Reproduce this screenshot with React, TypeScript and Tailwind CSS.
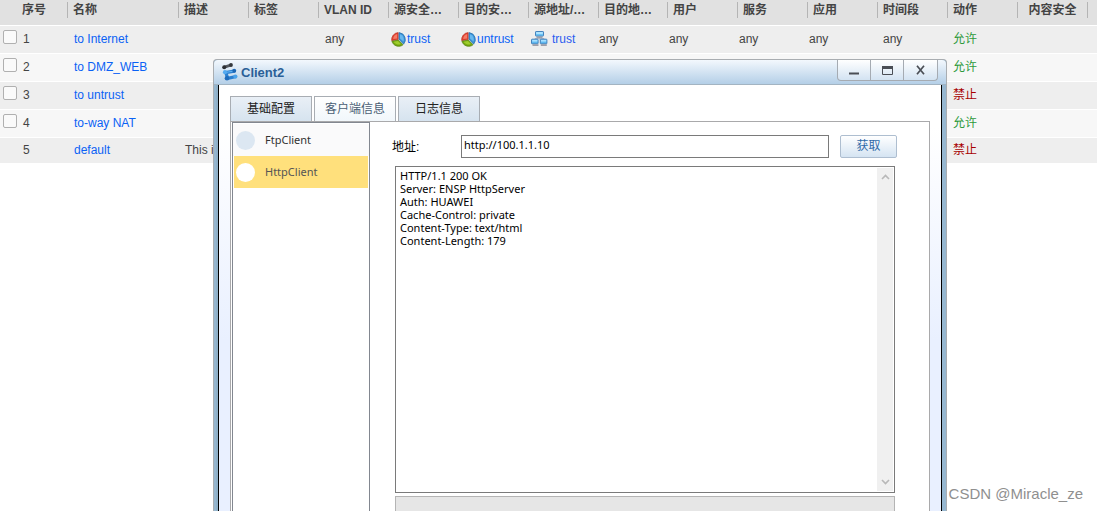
const columns = [
  { label: '序号', width: 'w-[67px]' },
  { label: '名称', width: 'w-[111px]' },
  { label: '描述', width: 'w-[70px]' },
  { label: '标签', width: 'w-[70px]' },
  { label: 'VLAN ID', width: 'w-[70px]' },
  { label: '源安全…', width: 'w-[70px]' },
  { label: '目的安…', width: 'w-[70px]' },
  { label: '源地址/…', width: 'w-[70px]' },
  { label: '目的地…', width: 'w-[69px]' },
  { label: '用户', width: 'w-[70px]' },
  { label: '服务', width: 'w-[70px]' },
  { label: '应用', width: 'w-[70px]' },
  { label: '时间段', width: 'w-[70px]' },
  { label: '动作', width: 'w-[70px]' },
  { label: '内容安全', width: 'w-[70px]', center: true },
  { label: '', width: '' },
];

const rules = [
  { id: 1, name: 'to Internet', allow: true, detailed: true },
  { id: 2, name: 'to DMZ_WEB', allow: true },
  { id: 3, name: 'to untrust', allow: false },
  { id: 4, name: 'to-way NAT', allow: true },
  { id: 5, name: 'default', desc: 'This i', allow: false },
];

const response = `HTTP/1.1 200 OK
Server: ENSP HttpServer
Auth: HUAWEI
Cache-Control: private
Content-Type: text/html
Content-Length: 179`;

function ZoneIcon() {
  return (
    <svg width="15" height="15" viewBox="0 0 15 15" className="shrink-0">
      <circle cx="7.5" cy="7.5" r="7" fill="#f4f6f2" />
      <path d="M7.2 7.6V0.6A7 7 0 0 0 0.7 8.6Z" fill="#e2402f" stroke="#b8342a" strokeWidth="0.7" />
      <path d="M6.2 6.4V2A5.3 5.3 0 0 0 2.2 7Z" fill="#f47c68" />
      <path d="M8 0.6A7 7 0 0 1 12.6 12.2L8 7.2Z" fill="#3a93d8" stroke="#2b6ea8" strokeWidth="0.7" />
      <path d="M9 2.2A5.6 5.6 0 0 1 12.5 9.5L9 6.4Z" fill="#69b8ee" />
      <path d="M0.9 9.2 7.4 8.1 12 12.8A7 7 0 0 1 0.9 9.2Z" fill="#74a80f" stroke="#557d10" strokeWidth="0.7" />
      <path d="M2.6 9.8 7 9 9.8 12A5.6 5.6 0 0 1 2.6 9.8Z" fill="#9fce2c" />
    </svg>
  );
}

function AddressIcon() {
  return (
    <svg width="17" height="16" viewBox="0 0 17 16" className="shrink-0">
      <path d="M8.5 6.5v2M4 8.5v-1h9v1" fill="none" stroke="#aab4c4" />
      <rect x="4.5" y="0.5" width="8" height="4.6" rx="0.6" fill="#6cc4f6" stroke="#4583bd" />
      <rect x="5.2" y="1.1" width="6.6" height="1.8" fill="#b4e6ff" />
      <rect x="5.5" y="5.6" width="6" height="1.2" fill="#8a8f9c" />
      <rect x="0.5" y="8.2" width="6.6" height="4.6" rx="0.6" fill="#5db8f0" stroke="#4583bd" />
      <rect x="1.2" y="8.9" width="5.2" height="1.7" fill="#a8e0ff" />
      <rect x="1.5" y="13.4" width="6" height="1.4" fill="#8c8c98" />
      <rect x="9.3" y="8.2" width="6.6" height="4.6" rx="0.6" fill="#5db8f0" stroke="#4583bd" />
      <rect x="10" y="8.9" width="5.2" height="1.7" fill="#a8e0ff" />
      <rect x="9.8" y="13.4" width="6" height="1.4" fill="#8c8c98" />
    </svg>
  );
}

function ClientLogo() {
  return (
    <svg width="16" height="18" viewBox="0 0 16 18" className="shrink-0">
      <path d="M2.4 4.2 8.6 2.2" stroke="#53585f" strokeWidth="2.8" strokeLinecap="round" />
      <circle cx="2.2" cy="4.2" r="2" fill="#2b2e33" />
      <circle cx="9" cy="2" r="1.9" fill="#34383d" />
      <path d="M3.5 9.6 12.2 8.2M3.9 9.8 5.4 14.6M5.6 15.4 13 13.8" fill="none" stroke="#2a7fd0" strokeWidth="3.2" strokeLinecap="round" />
      <circle cx="3" cy="9.2" r="2.1" fill="#54aaf0" />
      <circle cx="12.2" cy="7.8" r="2" fill="#1c66b4" />
      <circle cx="5" cy="15.2" r="2.3" fill="#1f6cbc" />
      <circle cx="13.4" cy="13.6" r="2.1" fill="#4ba3ea" />
      <path d="M5 9.2 10.5 8.3" stroke="#63b4f4" />
    </svg>
  );
}

function RuleTable() {
  return (
    <table className="w-full table-fixed border-collapse text-xs text-[#444]">
      <thead>
        <tr className="h-[25px] border-b border-white bg-[#e1e1e1]">
          {columns.map((col, i) => (
            <th key={i} className={`${col.width} p-0 pt-0.5 text-left align-top font-bold whitespace-nowrap`}>
              <div
                className={`h-4 leading-4 ${i === 0 ? 'pl-[22px]' : 'border-l border-[#b4b4b4]'} ${
                  col.center ? 'text-center' : i > 0 ? 'pl-[5px]' : ''
                }`}
              >
                {col.label}
              </div>
            </th>
          ))}
        </tr>
      </thead>
      <tbody>
        {rules.map((rule) => (
          <tr
            key={rule.id}
            className="h-7 border-b border-white odd:bg-[#eee] even:bg-[#f7f7f7] last:h-[26px]"
          >
            <td className="p-0">
              <div className="flex items-center">
                {rule.id < 5 && (
                  <input
                    type="checkbox"
                    aria-label={rule.name}
                    className="mr-1.5 mb-1 ml-[3px] size-3.5 appearance-none rounded-xs border border-[#b0b0b0] bg-[#fafafa]"
                  />
                )}
                <span className={rule.id < 5 ? '' : 'pl-[23px]'}>{rule.id}</span>
              </div>
            </td>
            <td className="p-0 pl-[7px]">
              <a href="#" className="text-[#0a62f5]">{rule.name}</a>
            </td>
            <td className="p-0 pl-[7px] whitespace-nowrap">{rule.desc}</td>
            <td />
            <td className="p-0 pl-[7px]">{rule.detailed && 'any'}</td>
            <td className="p-0 pl-[3px]">
              {rule.detailed && (
                <a href="#" className="flex items-center gap-px text-[#0a62f5]">
                  <ZoneIcon />
                  trust
                </a>
              )}
            </td>
            <td className="p-0 pl-[3px]">
              {rule.detailed && (
                <a href="#" className="flex items-center gap-px text-[#0a62f5]">
                  <ZoneIcon />
                  untrust
                </a>
              )}
            </td>
            <td className="p-0 pl-[3px]">
              {rule.detailed && (
                <a href="#" className="flex items-center gap-1 text-[#2a5cf0]">
                  <AddressIcon />
                  trust
                </a>
              )}
            </td>
            <td className="p-0 pl-px">{rule.detailed && 'any'}</td>
            <td className="p-0 pl-0.5">{rule.detailed && 'any'}</td>
            <td className="p-0 pl-0.5">{rule.detailed && 'any'}</td>
            <td className="p-0 pl-0.5">{rule.detailed && 'any'}</td>
            <td className="p-0 pl-1.5">{rule.detailed && 'any'}</td>
            <td className={`p-0 pl-1.5 ${rule.allow ? 'text-[#2e9a3c]' : 'text-[#a80000]'}`}>
              {rule.allow ? '允许' : '禁止'}
            </td>
            <td />
            <td />
          </tr>
        ))}
      </tbody>
    </table>
  );
}

function WindowButtons() {
  const button = 'flex h-5 w-[33px] items-center justify-center';
  return (
    <div className="mr-2 flex divide-x divide-[#a5abb2] self-start rounded-b border border-t-0 border-[#a5abb2] bg-linear-to-b from-white to-[#d3e3f2]">
      <button className={button} aria-label="Minimize">
        <svg width="11" height="11"><path d="M0 8.5h10" stroke="#4a4e55" strokeWidth="2" /></svg>
      </button>
      <button className={button} aria-label="Maximize">
        <svg width="11" height="9"><path d="M.5 0v8.5h10V0" fill="none" stroke="#4a4e55" /><path d="M0 1.5h11" stroke="#4a4e55" strokeWidth="3" /></svg>
      </button>
      <button className={button} aria-label="Close">
        <svg width="9" height="10"><path d="M1 .8 8 9.2M8 .8 1 9.2" stroke="#4a4e55" strokeWidth="1.7" /></svg>
      </button>
    </div>
  );
}

function Tabs() {
  return (
    <div className="flex gap-0.5 text-xs text-[#222]">
      {['基础配置', '客户端信息', '日志信息'].map((tab, i) => (
        <button
          key={tab}
          className={`h-[25px] w-[82px] border border-b-0 border-[#a8adb3] bg-linear-to-b ${
            i === 1 ? 'from-white to-[#f1f7fb] text-[#4a5f75]' : 'from-[#e9eff6] to-[#d6e3ef]'
          }`}
        >
          {tab}
        </button>
      ))}
    </div>
  );
}

function Chevron({ up }: { up?: boolean }) {
  return (
    <svg width="9" height="6" viewBox="0 0 9 6">
      <path d={up ? 'M1 5l3.5-3.5L8 5' : 'M1 1l3.5 3.5L8 1'} fill="none" stroke="#b8b8b8" strokeWidth="1.6" />
    </svg>
  );
}

function ClientWindow() {
  return (
    <section className="absolute top-[59px] right-[150px] bottom-0 left-[213px] flex flex-col rounded-t border border-b-0 border-[#a9adb1] bg-[#96b7d0]">
      <header className="flex h-[25px] items-center rounded-t border-b border-[#a3b4c2] bg-linear-to-b from-[#f3f8fd] to-[#b4cfe7] pl-2">
        <ClientLogo />
        <h1 className="mt-0.5 ml-[3px] flex-1 text-[13px] font-bold text-[#2a5f97]">Client2</h1>
        <WindowButtons />
      </header>
      <div className="mr-1 ml-0.5 flex min-h-0 flex-1 border-l-2 border-[#8fb0c8]">
        <div className="flex min-w-0 flex-1 flex-col border-x border-black bg-linear-to-b from-white from-10% to-[#e9f0ff] to-60% px-[11px] pt-[11px]">
          <Tabs />
          <div className="flex min-h-0 flex-1 border border-b-0 border-[#a9a9ab] bg-white pl-px">
            <ul className="w-[138px] border border-b-0 border-[#828790] pt-px font-['Noto_Sans'] text-[11px]">
              <li className="flex h-8 items-center gap-2.5 bg-[#fafafb] px-[3px] text-[#333]">
                <span className="size-[19px] rounded-full bg-[#dce7f2]" />
                FtpClient
              </li>
              <li className="mx-px flex h-8 items-center gap-2.5 bg-[#ffe07c] px-0.5 text-[#555]">
                <span className="size-[19px] rounded-full bg-white" />
                HttpClient
              </li>
            </ul>
            <div className="flex min-w-0 flex-1 flex-col pt-[13px] pr-[34px] pl-[25px]">
              <form className="-mr-0.5 -ml-[3px] flex items-center text-black">
                <label htmlFor="address" className="w-[69px] text-xs">地址:</label>
                <input
                  id="address"
                  defaultValue="http://100.1.1.10"
                  className="h-[23px] min-w-0 flex-1 border border-[#7a7a7a] px-0.5 pb-1 font-['Noto_Sans'] text-[11px] outline-none"
                />
                <button
                  type="button"
                  className="ml-[11px] h-[23px] w-[57px] rounded-xs border border-[#aebed0] bg-linear-to-b from-white to-[#d5e4f2] pb-0.5 text-xs text-[#2f6aa8]"
                >
                  获取
                </button>
              </form>
              <div className="mt-2 flex min-h-0 flex-1 border border-[#7a7a7a] p-px">
                <textarea
                  readOnly
                  aria-label="Response"
                  value={response}
                  className="flex-1 resize-none overflow-hidden px-[3px] pt-px font-['Noto_Sans'] text-[11px] leading-[13px] text-black outline-none"
                />
                <div className="flex w-4 flex-col items-center justify-between bg-[#f0f0f0] py-1.5">
                  <Chevron up />
                  <Chevron />
                </div>
              </div>
              <div className="mt-[3px] h-[15px] border border-b-0 border-[#b4b4b4] bg-[#e6e6e6]" />
            </div>
          </div>
        </div>
      </div>
    </section>
  );
}

export default function App() {
  return (
    <div className="relative h-screen overflow-hidden bg-white font-['Liberation_Sans','Noto_Sans_CJK_SC',sans-serif]">
      <RuleTable />
      <ClientWindow />
      <div className="absolute right-3.5 bottom-1.5 text-[15px] text-[#8f8f8f]">CSDN @Miracle_ze</div>
    </div>
  );
}
